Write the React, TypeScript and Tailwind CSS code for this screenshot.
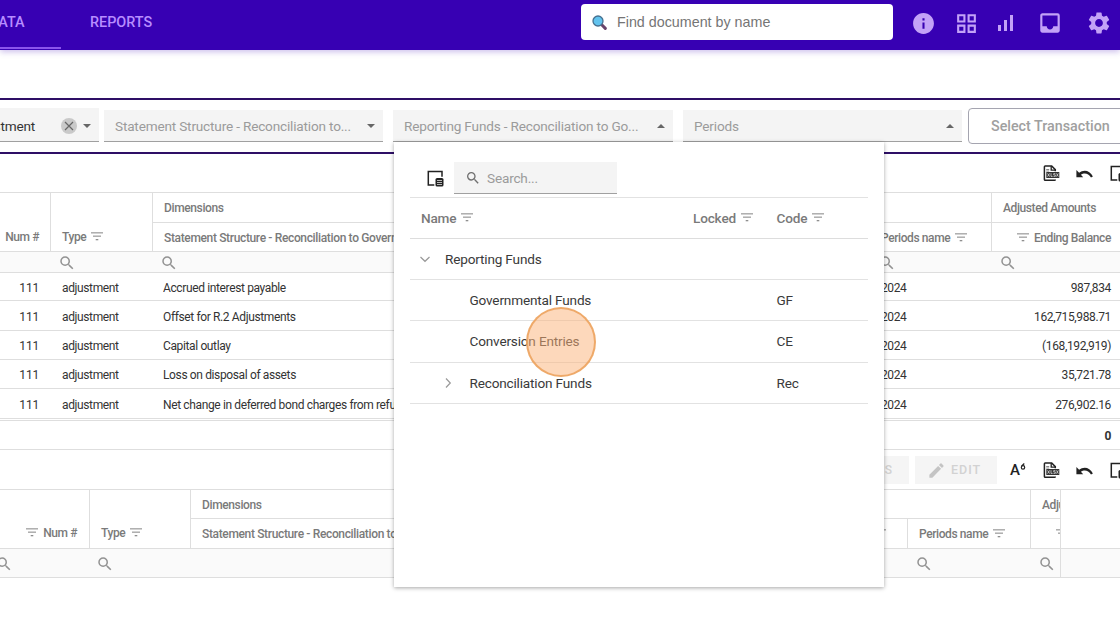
import type { ReactNode } from "react";
import {
  MdEdit,
  MdGridView,
  MdInbox,
  MdInfo,
  MdSearch,
  MdSettings,
  MdSignalCellularAlt,
} from "react-icons/md";

const FilterIcon = ({ className = "" }: { className?: string }) => (
  <svg viewBox="0 0 12 9" className={`h-[9px] w-3 shrink-0 ${className}`} fill="#8f8f8f">
    <rect x="0" y="0.3" width="12" height="1.1" />
    <rect x="2" y="3.6" width="8" height="1.1" />
    <rect x="4.7" y="7" width="2.6" height="1.3" />
  </svg>
);

const Lens = ({ className = "" }: { className?: string }) => (
  <MdSearch className={`relative top-px size-[18px] shrink-0 text-[#929292] ${className}`} />
);

const XlsxIcon = () => (
  <svg viewBox="0 0 17 17" className="h-[17px] w-[17px] shrink-0" fill="none">
    <path d="M12.3 6.3V4.6L8.7 1H2.2Q1.400 1 1.400 1.800v12.600q0 .8.8.8h9.300q.8 0 .8-.8" stroke="#222" strokeWidth="1.500" />
    <path d="M8.200 1v4.200h4" stroke="#222" strokeWidth="1.300" />
    <path d="M3.200 4.500h3M3.200 6h3" stroke="#555" strokeWidth=".7" />
    <rect x="3.300" y="7" width="13" height="6" fill="#333" />
    <path d="M4.600 8.400l2 3.200m0-3.200l-2 3.200M8 8.200v3.200h1.600M12.400 8.600h-1.700v1.300h1.600v1.500h-1.800M13.500 8.400l1.800 3.200m0-3.200l-1.800 3.200" stroke="#eee" strokeWidth=".7" />
  </svg>
);

const UndoIcon = () => (
  <svg viewBox="0 0 17 9" className="h-[9px] w-[17px] shrink-0">
    <path d="M.4 1v7.200h6.800L4.900 5.800C7.800 3.700 12.300 3.800 15 8.500L16.900 7.600C13.800.900 7.300.300 3.100 3.800z" fill="#222" />
  </svg>
);

const ColumnsIcon = () => (
  <svg viewBox="0 0 17 17" className="size-[17px] shrink-0">
    <path d="M15 6.800V1.600H1.300v13.500h6" fill="none" stroke="#222" strokeWidth="1.500" />
    <rect x="8.500" y="8" width="8" height="8.500" rx="1.600" fill="#222" />
    <path d="M10 10.500h5M10 12.500h5M10 14.500h5" stroke="#ddd" strokeWidth=".8" />
  </svg>
);

const Caret = ({ up = false }: { up?: boolean }) => (
  <svg viewBox="0 0 8 4" className="h-1 w-2 shrink-0" fill="#666">
    <path d={up ? "M0 4L4 0l4 4z" : "M0 0l4 4 4-4z"} />
  </svg>
);

const ColorLens = () => (
  <svg viewBox="0 0 15 15" className="size-[15px] shrink-0">
    <path d="M9.500 9.500l3.800 3.900" stroke="#69456b" strokeWidth="3" strokeLinecap="round" />
    <circle cx="6" cy="6" r="5" fill="#62c3ee" stroke="#46708f" strokeWidth="1.300" />
  </svg>
);

function Field({ text, up, className }: { text: string; up?: boolean; className: string }) {
  return (
    <div
      className={`flex h-8 shrink-0 items-center justify-between border-b border-[#a0a0a0] bg-[#f4f4f4] pt-px pr-2 pl-[11px] ${className}`}
    >
      <span className="whitespace-nowrap text-[13.6px] tracking-[-0.18px] text-[#9b9b9b]">{text}</span>
      <Caret up={up} />
    </div>
  );
}

const rows = [
  { name: "Accrued interest payable", amount: "987,834", h: "h-[28px]" },
  { name: "Offset for R.2 Adjustments", amount: "162,715,988.71", h: "h-[30px]" },
  { name: "Capital outlay", amount: "(168,192,919)", h: "h-[29px]" },
  { name: "Loss on disposal of assets", amount: "35,721.78", h: "h-[29px]" },
  { name: "Net change in deferred bond charges from refunding", amount: "276,902.16", h: "h-[30px]" },
];

const line = "border-[#dedede]";

function JournalGrid() {
  return (
    <section className="text-[12px] tracking-[-0.37px] text-[#333]">
      <div className="flex h-[39px] items-center justify-end gap-4 overflow-hidden border-b border-[#dedede] text-[#222]">
        <div className="flex h-full w-[77px] shrink-0 items-center">
          <XlsxIcon />
          <div className="ml-[16px]"><UndoIcon /></div>
          <div className="ml-[17px]"><ColumnsIcon /></div>
        </div>
      </div>
      <div className="flex h-[59px] border-b border-[#dedede] font-medium tracking-[-0.4px] text-[#7a7a7a]">
        <div className={`flex w-[51px] shrink-0 items-end justify-end border-r pr-[11px] pb-[5px] ${line}`}>
          <span className="whitespace-nowrap">Num #</span>
        </div>
        <div className={`flex w-[102px] shrink-0 items-end border-r pb-[5px] pl-[11px] ${line}`}>
          <span>Type</span>
          <FilterIcon className="mb-[5px] ml-[5px]" />
        </div>
        <div className={`w-[839px] shrink-0 border-r ${line}`}>
          <div className={`flex h-[30px] items-center border-b pl-[11px] tracking-[-0.37px] ${line}`}>Dimensions</div>
          <div className="flex h-[29px] items-center">
            <span className="w-[728px] shrink-0 overflow-hidden pl-[11px] tracking-[-0.35px] whitespace-nowrap">
              Statement Structure - Reconciliation to Government-wide
            </span>
            <span className="whitespace-nowrap">Periods name</span>
            <FilterIcon className="ml-[5px]" />
          </div>
        </div>
        <div className="min-w-0 flex-1">
          <div className={`flex h-[30px] items-center border-b pl-[11px] whitespace-nowrap ${line}`}>Adjusted Amounts</div>
          <div className="flex h-[29px] items-center justify-end pr-[9px] whitespace-nowrap">
            <FilterIcon className="mr-[5px]" />
            Ending Balance
          </div>
        </div>
      </div>
      <div className="flex h-[21px] items-center border-b border-[#dedede] bg-[#fafafa]">
        <Lens className="ml-[58px]" />
        <Lens className="ml-[84px]" />
        <Lens className="ml-[700px]" />
        <Lens className="ml-[103px]" />
      </div>
      {rows.map((row) => (
        <div key={row.name} className={`flex items-center border-b border-[#dedede] pt-[2px] ${row.h}`}>
          <span className="w-[39px] shrink-0 text-right tracking-[-0.2px]">111</span>
          <span className="w-[124px] shrink-0 pl-[23px]">adjustment</span>
          <span className="w-[718px] shrink-0 overflow-hidden whitespace-nowrap">{row.name}</span>
          <span>2024</span>
          <span className="ml-auto pr-[9px]">{row.amount}</span>
        </div>
      ))}
      <div className="h-[2px] border-b border-[#dedede]" />
      <div className="flex h-[29px] items-center justify-end border-b border-[#dedede] pt-[2px] pr-[9px] font-bold">0</div>
    </section>
  );
}

function DetailGrid() {
  return (
    <section className="text-[12px] tracking-[-0.4px] text-[#7a7a7a]">
      <div className="flex h-10 items-center border-b border-[#dedede] pt-px">
        <div className="ml-[820px] flex h-[28px] w-[89px] shrink-0 items-center justify-end bg-[#f5f5f5] pr-4 text-[12px] font-medium tracking-[1px] text-[#d2d2d2]">
          DETAILS
        </div>
        <div className="ml-[6px] flex h-[28px] w-[82px] shrink-0 items-center bg-[#f5f5f5] pl-3 text-[12.5px] font-medium tracking-[1px] text-[#d2d2d2]">
          <MdEdit className="mr-[5px] size-[19px] text-[#c4c4c4]" />
          EDIT
        </div>
        <div className="ml-[13px] flex w-[17px] shrink-0 items-start text-[#222]">
          <span className="text-[15px] leading-[17px] font-medium tracking-normal">A</span>
          <svg viewBox="0 0 6 7" className="mt-px h-[7px] w-[6px] shrink-0">
            <path d="M4.300.5L1.700 3" fill="none" stroke="#222" strokeWidth="1.200" />
            <circle cx="3" cy="4.400" r="1.700" fill="none" stroke="#222" strokeWidth="1.200" />
          </svg>
        </div>
        <div className="ml-[16px] flex w-[77px] shrink-0 items-center">
          <XlsxIcon />
          <div className="ml-[16px]"><UndoIcon /></div>
          <div className="ml-[17px] w-[10px] overflow-hidden"><ColumnsIcon /></div>
        </div>
      </div>
      <div className="flex h-[59px] border-b border-[#dedede] font-medium">
        <div className={`flex w-[90px] shrink-0 items-end justify-end border-r pr-[12px] pb-[6px] ${line}`}>
          <FilterIcon className="mr-[5px] mb-[5px]" />
          <span className="whitespace-nowrap">Num #</span>
        </div>
        <div className={`flex w-[101px] shrink-0 items-end border-r pb-[6px] pl-[11px] ${line}`}>
          <span>Type</span>
          <FilterIcon className="mb-[5px] ml-[5px]" />
        </div>
        <div className={`w-[840px] shrink-0 border-r ${line}`}>
          <div className={`flex h-[29px] items-center border-b pt-px pl-[11px] tracking-[-0.37px] ${line}`}>Dimensions</div>
          <div className="flex h-[29px] items-center">
            <div className={`flex h-full w-[717px] shrink-0 items-center justify-between border-r pl-[11px] ${line}`}>
              <span className="tracking-[-0.35px] whitespace-nowrap">Statement Structure - Reconciliation to Government-wide</span>
              <FilterIcon className="mr-[21px]" />
            </div>
            <span className="pl-[11px] whitespace-nowrap">Periods name</span>
            <FilterIcon className="ml-[5px]" />
          </div>
        </div>
        <div className={`w-[30px] shrink-0 overflow-hidden border-r ${line}`}>
          <div className={`flex h-[29px] items-center border-b pt-px pl-[11px] whitespace-nowrap ${line}`}>Adjusted</div>
          <div className="flex h-[29px] items-center pl-[25px]"><FilterIcon /></div>
        </div>
      </div>
      <div className="flex h-[29px] border-b border-[#dedede] bg-[#fafafa]">
        <div className={`flex w-[1061px] items-center border-r ${line}`}>
          <Lens className="-ml-[5px]" />
          <Lens className="ml-[83px]" />
          <Lens className="ml-[801px]" />
          <Lens className="ml-[105px]" />
        </div>
      </div>
    </section>
  );
}

function TreeRow({ label, code, h, expander }: { label: string; code?: string; h: string; expander?: ReactNode }) {
  return (
    <div className={`flex items-center border-b border-[#e2e2e2] ${h}`}>
      <div className="flex w-[60px] shrink-0 items-center justify-end pr-4">{expander}</div>
      <span className="w-[307px] shrink-0">{label}</span>
      <span>{code}</span>
    </div>
  );
}

const Chevron = ({ down = false }: { down?: boolean }) => (
  <svg viewBox="0 0 12 12" className="size-3 shrink-0">
    <path d={down ? "M1.500 4l4.500 4.300L10.500 4" : "M4 1.500l4.300 4.500L4 10.500"} fill="none" stroke="#999" strokeWidth="1.200" />
  </svg>
);

function FundsPopup() {
  return (
    <div className="absolute top-[142px] left-[393.5px] h-[444.5px] w-[490px] bg-white px-4 text-[13.6px] tracking-[-0.18px] text-[#3a3a3a] shadow-[0_1px_4px_rgba(0,0,0,0.35)]">
      <div className="flex h-14 items-start border-b border-[#e2e2e2] pt-[20px]">
        <div className="mt-[8px] ml-[17.5px]"><ColumnsIcon /></div>
        <div className="ml-[10px] flex h-[32px] w-[163px] items-center border-b border-[#a0a0a0] bg-[#f4f4f4] pt-px pl-[11px] text-[#9b9b9b]">
          <MdSearch className="mr-[6px] size-4 text-[#707070]" />
          Search...
        </div>
      </div>
      <div className="flex h-[41px] items-center border-b-[1.5px] border-[#dddddd] pl-[11.5px] font-medium text-[#7a7a7a]">
        <div className="flex w-[272px] items-center">Name<FilterIcon className="ml-[5px]" /></div>
        <div className="flex w-[83.5px] items-center">Locked<FilterIcon className="ml-[5px]" /></div>
        <div className="flex items-center">Code<FilterIcon className="ml-[5px]" /></div>
      </div>
      <div className="flex h-[41px] items-center border-b border-[#e2e2e2] pl-[9px]">
        <Chevron down />
        <span className="ml-[14.5px]">Reporting Funds</span>
      </div>
      <TreeRow label="Governmental Funds" code="GF" h="h-[41px]" />
      <TreeRow label="Conversion Entries" code="CE" h="h-[42px]" />
      <TreeRow label="Reconciliation Funds" code="Rec" h="h-[41px]" expander={<Chevron />} />
      <div className="absolute top-[165px] left-[132px] size-[70px] rounded-full border-2 border-[#eda461]/90 bg-[#fbb277]/50" />
    </div>
  );
}

export default function App() {
  return (
    <div className="relative h-[625px] w-[1120px] overflow-hidden bg-white font-['Roboto',sans-serif]">
      <header className="relative flex h-[50px] bg-[#3700b3] shadow-[0_2px_6px_rgba(55,0,179,0.25)]">
        <nav className="flex w-[581px] shrink-0 text-[14.4px] font-medium text-[#b78dff]">
          <div className="flex h-[49px] w-[61px] items-center border-b-2 border-[#8a54ec]">
            <span className="-ml-[11px] pb-[2px]">DATA</span>
          </div>
          <div className="flex h-12 items-center pb-[3px] pl-[29px]">REPORTS</div>
        </nav>
        <div className="mt-1 flex h-9 w-[312px] shrink-0 items-center rounded bg-white pl-[11px] text-[#757575]">
          <ColorLens />
          <span className="ml-[10px] pt-px font-['Liberation_Sans',sans-serif] text-[14.3px]">Find document by name</span>
        </div>
        <div className="flex h-[46px] items-center text-[#c3a2f7]">
          <MdInfo className="ml-[18px] size-[25px]" />
          <MdGridView className="ml-[18px] size-[25px]" />
          <MdSignalCellularAlt className="ml-[14px] size-[24px]" />
          <MdInbox className="ml-[20px] size-[26px]" />
          <MdSettings className="ml-[23px] size-[26px]" />
        </div>
      </header>
      <main>
        <div className="mt-[48px] flex h-[56px] items-start overflow-hidden border-y-2 border-[#2e0f66] pt-[8px]">
          <div className="flex h-[34px] w-[99px] shrink-0 items-center border-b border-[#a0a0a0] bg-[#f4f4f4] pt-[3px] text-[13.6px] tracking-[-0.18px] text-[#333]">
            <span className="-ml-[33px] w-[94px]">Adjustment</span>
            <span className="flex size-4 shrink-0 items-center justify-center rounded-full bg-[#c9c9c9]">
              <svg viewBox="0 0 10 10" className="size-[10px]">
                <path d="M1 1l8 8M9 1L1 9" stroke="#666" strokeWidth="1.200" />
              </svg>
            </span>
            <span className="ml-[6px]"><Caret /></span>
          </div>
          <Field className="mt-[2px] ml-[5px] w-[279px]" text="Statement Structure - Reconciliation to..." />
          <Field className="mt-[2px] ml-[10px] w-[280px]" text="Reporting Funds - Reconciliation to Go..." up />
          <Field className="mt-[2px] ml-[10px] w-[279px]" text="Periods" up />
          <button className="ml-[6px] h-9 w-[170px] shrink-0 rounded border border-[#a5a5b0] bg-white pt-px pl-[22px] text-left text-[14.3px] font-medium whitespace-nowrap text-[#a0a0a0]">
            Select Transaction
          </button>
        </div>
        <JournalGrid />
        <DetailGrid />
      </main>
      <FundsPopup />
    </div>
  );
}
